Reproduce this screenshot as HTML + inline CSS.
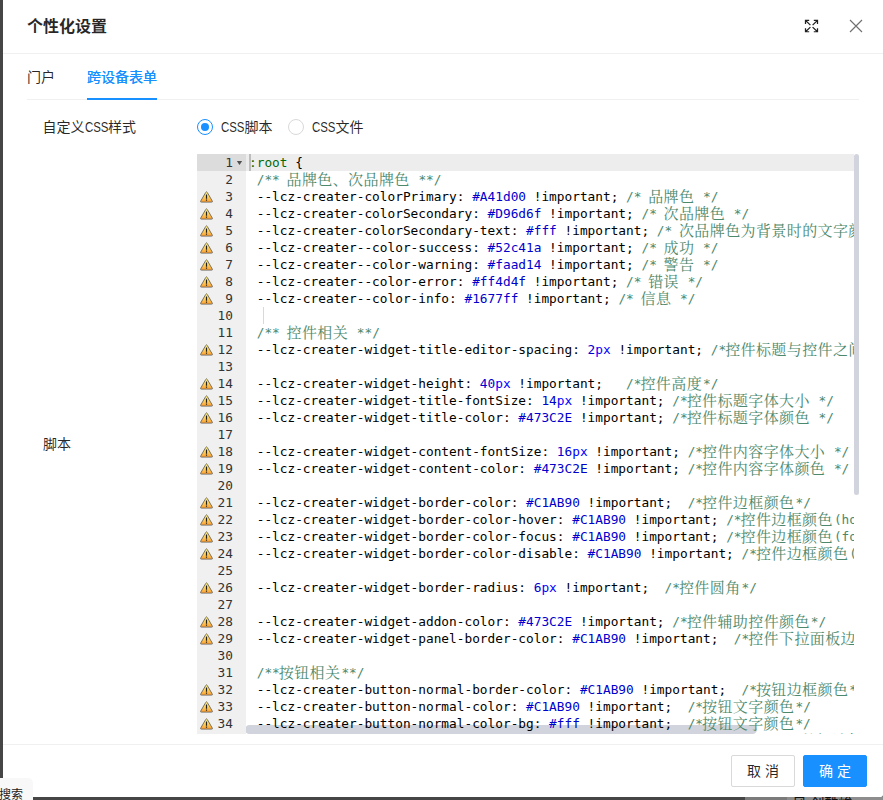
<!DOCTYPE html>
<html lang="zh-CN">
<head>
<meta charset="utf-8">
<title>个性化设置</title>
<style>
*{box-sizing:border-box;margin:0;padding:0}
html,body{width:883px;height:800px;overflow:hidden}
body{position:relative;background:#464646;font-family:"Liberation Sans","Noto Sans CJK SC",sans-serif;font-size:14px;color:rgba(0,0,0,.85)}
.bgr1{position:absolute;left:745px;top:797px;width:42px;height:3px;background:#7b7b7b}
.bgr2{position:absolute;left:787px;top:797px;width:96px;height:3px;background:#8d8d8d;overflow:hidden}
.bgr2 span{position:absolute;left:5.5px;top:-1px;font-size:14px;line-height:14px;color:#111;white-space:nowrap}
.modal{position:absolute;left:3px;top:0;width:880px;height:797px;background:#fff;border-radius:0 0 2px 0}
.hd{position:absolute;left:0;top:0;width:880px;height:54px;border-bottom:1px solid #f0f0f0}
.title{position:absolute;left:24px;top:16px;font-size:16px;line-height:22px;font-weight:700;color:rgba(0,0,0,.85);white-space:nowrap}
.ic{position:absolute;display:block}
.tabs{position:absolute;left:24px;top:54px;width:832px;height:46px;border-bottom:1px solid #f0f0f0}
.tab{position:absolute;top:12px;font-size:14px;line-height:22px;white-space:nowrap;color:rgba(0,0,0,.85)}
.tab.on{color:#1890ff;text-shadow:0 0 .25px currentColor}
.ink{position:absolute;left:60px;top:44px;width:70px;height:2px;background:#1890ff}
.lbl{position:absolute;font-size:14px;line-height:22px;white-space:nowrap;color:rgba(0,0,0,.85)}
.nw{display:inline-block;transform:scaleX(.815);transform-origin:0 50%;margin-right:-5.3px}
.radio{position:absolute;width:16px;height:16px;border:1px solid #d9d9d9;border-radius:50%;background:#fff}
.radio.on{border-color:#1890ff}
.radio.on::after{content:"";position:absolute;left:3px;top:3px;width:8px;height:8px;border-radius:50%;background:#1890ff}
/* editor */
.ed{position:absolute;left:194px;top:154px;width:662px;height:580px;overflow:hidden;background:#fff;font-family:"DejaVu Sans Mono","Liberation Mono","Noto Sans CJK SC",monospace;font-size:12.79px;line-height:17px;color:#000}
.gut{position:absolute;left:0;top:0;width:49px;height:580px;background:#f0f0f0;color:#333}
.gc{position:relative;height:17px;padding-right:13px;text-align:right;white-space:pre}
.gc.a{background:#dcdcdc}
.gc svg{position:absolute;left:3px;top:2.5px;width:13px;height:12px;display:block}
.fold{position:absolute;left:39.8px;top:7px;width:5.4px;height:4px;background:#505050;clip-path:polygon(0 0,100% 0,50% 100%)}
.sc{position:absolute;left:49px;top:0;width:608px;height:580px;overflow:hidden}
.al{position:absolute;left:0;top:0;width:608px;height:17px;background:rgba(0,0,0,.07)}
.cur{position:absolute;left:3px;top:0;width:2px;height:17px;background:#bdbdbd}
.ig{position:absolute;left:17px;top:153px;width:1px;height:17px;background:#d9d9d9}
.tx{position:absolute;left:3px;top:0}
.l{height:17px;white-space:pre}
.l i{font-style:normal;display:inline-block;vertical-align:top;height:17px;line-height:17px;font-family:"Noto Serif CJK SC","Noto Sans CJK SC",serif;font-size:15px;letter-spacing:.4px;font-weight:400;position:relative;top:-1px;left:-1px}
.s{color:rgb(3,106,7)}
.n{color:rgb(0,0,205)}
.k{color:rgb(0,0,255)}
.c{color:rgb(76,136,107)}
.vs{position:absolute;left:657px;top:0;width:5px;height:341px;border-radius:3px;background:#d1d4dc}
.hs{position:absolute;left:48px;top:571px;width:512px;height:9px;border-radius:5px;background:#d1d4dc}
/* footer */
.ft{position:absolute;left:0;top:744px;width:880px;height:53px;border-top:1px solid #f0f0f0}
.btn{position:absolute;top:10px;width:64px;height:32px;border:1px solid #d9d9d9;border-radius:2px;background:#fff;font-size:14px;line-height:30px;text-align:center;color:rgba(0,0,0,.85);letter-spacing:4px;padding-left:4px;white-space:nowrap}
.btn.p{background:#1890ff;border-color:#1890ff;color:#fff}
.tag{position:absolute;left:0;top:778px;width:33px;height:22px;background:#f8f8f8;border-radius:0 5px 0 0;overflow:hidden}
.tag span{position:absolute;left:-1px;top:9px;font-size:12px;line-height:16px;color:#222;white-space:nowrap}
</style>
</head>
<body>
<div class="bgr1"></div>
<div class="bgr2"><span>风 创酷峻</span></div>
<svg width="0" height="0" style="position:absolute"><defs><linearGradient id="wg" x1="0" y1="0" x2="0" y2="1"><stop offset="0" stop-color="#fff78f"/><stop offset="0.45" stop-color="#ffd560"/><stop offset="1" stop-color="#ff9d2c"/></linearGradient></defs></svg>
<div class="modal">
  <div class="hd">
    <div class="title">个性化设置</div>
    <svg class="ic" style="left:801px;top:19px" width="15" height="14.2" viewBox="0 0 15 15" preserveAspectRatio="none" fill="none" stroke="#1f1f1f" stroke-width="1.25">
      <path d="M1.5 5.2V1.5H5.2M1.5 1.5L6.4 6.4M9.8 1.5H13.5V5.2M13.5 1.5L8.6 6.4M1.5 9.8V13.5H5.2M1.5 13.5L6.4 8.6M13.5 9.8V13.5H9.8M13.5 13.5L8.6 8.6"/>
    </svg>
    <svg class="ic" style="left:846px;top:19px" width="14" height="14" viewBox="0 0 14 14" fill="none" stroke="#707070" stroke-width="1.15">
      <path d="M1 1L13 13M13 1L1 13"/>
    </svg>
  </div>
  <div class="tabs">
    <div class="tab" style="left:0">门户</div>
    <div class="tab on" style="left:60px">跨设备表单</div>
    <div class="ink"></div>
  </div>
  <div class="lbl" style="left:39.5px;top:116px">自定义<span class="nw">CSS</span>样式</div>
  <div class="radio on" style="left:194px;top:119px"></div>
  <div class="lbl" style="left:218px;top:116px"><span class="nw">CSS</span>脚本</div>
  <div class="radio" style="left:285px;top:119px"></div>
  <div class="lbl" style="left:309px;top:116px"><span class="nw">CSS</span>文件</div>
  <div class="lbl" style="left:40px;top:433px">脚本</div>

  <div class="ed">
    <div class="gut">
<div class="gc a">1</div>
<div class="gc">2</div>
<div class="gc w"><svg viewBox="0 0 13 12"><path d="M5.7 1.5Q6.5 0.1 7.3 1.5L12.3 10.1Q12.8 11.1 11.7 11.1H1.3Q0.2 11.1 0.7 10.1Z" fill="url(#wg)" stroke="#6b655c" stroke-width="0.9" stroke-linejoin="round"/><path d="M5.9 3.5h1.2v4.3h-1.2zM5.9 8.6h1.2v1.2h-1.2z" fill="#1e1e1e"/></svg>3</div>
<div class="gc w"><svg viewBox="0 0 13 12"><path d="M5.7 1.5Q6.5 0.1 7.3 1.5L12.3 10.1Q12.8 11.1 11.7 11.1H1.3Q0.2 11.1 0.7 10.1Z" fill="url(#wg)" stroke="#6b655c" stroke-width="0.9" stroke-linejoin="round"/><path d="M5.9 3.5h1.2v4.3h-1.2zM5.9 8.6h1.2v1.2h-1.2z" fill="#1e1e1e"/></svg>4</div>
<div class="gc w"><svg viewBox="0 0 13 12"><path d="M5.7 1.5Q6.5 0.1 7.3 1.5L12.3 10.1Q12.8 11.1 11.7 11.1H1.3Q0.2 11.1 0.7 10.1Z" fill="url(#wg)" stroke="#6b655c" stroke-width="0.9" stroke-linejoin="round"/><path d="M5.9 3.5h1.2v4.3h-1.2zM5.9 8.6h1.2v1.2h-1.2z" fill="#1e1e1e"/></svg>5</div>
<div class="gc w"><svg viewBox="0 0 13 12"><path d="M5.7 1.5Q6.5 0.1 7.3 1.5L12.3 10.1Q12.8 11.1 11.7 11.1H1.3Q0.2 11.1 0.7 10.1Z" fill="url(#wg)" stroke="#6b655c" stroke-width="0.9" stroke-linejoin="round"/><path d="M5.9 3.5h1.2v4.3h-1.2zM5.9 8.6h1.2v1.2h-1.2z" fill="#1e1e1e"/></svg>6</div>
<div class="gc w"><svg viewBox="0 0 13 12"><path d="M5.7 1.5Q6.5 0.1 7.3 1.5L12.3 10.1Q12.8 11.1 11.7 11.1H1.3Q0.2 11.1 0.7 10.1Z" fill="url(#wg)" stroke="#6b655c" stroke-width="0.9" stroke-linejoin="round"/><path d="M5.9 3.5h1.2v4.3h-1.2zM5.9 8.6h1.2v1.2h-1.2z" fill="#1e1e1e"/></svg>7</div>
<div class="gc w"><svg viewBox="0 0 13 12"><path d="M5.7 1.5Q6.5 0.1 7.3 1.5L12.3 10.1Q12.8 11.1 11.7 11.1H1.3Q0.2 11.1 0.7 10.1Z" fill="url(#wg)" stroke="#6b655c" stroke-width="0.9" stroke-linejoin="round"/><path d="M5.9 3.5h1.2v4.3h-1.2zM5.9 8.6h1.2v1.2h-1.2z" fill="#1e1e1e"/></svg>8</div>
<div class="gc w"><svg viewBox="0 0 13 12"><path d="M5.7 1.5Q6.5 0.1 7.3 1.5L12.3 10.1Q12.8 11.1 11.7 11.1H1.3Q0.2 11.1 0.7 10.1Z" fill="url(#wg)" stroke="#6b655c" stroke-width="0.9" stroke-linejoin="round"/><path d="M5.9 3.5h1.2v4.3h-1.2zM5.9 8.6h1.2v1.2h-1.2z" fill="#1e1e1e"/></svg>9</div>
<div class="gc">10</div>
<div class="gc">11</div>
<div class="gc w"><svg viewBox="0 0 13 12"><path d="M5.7 1.5Q6.5 0.1 7.3 1.5L12.3 10.1Q12.8 11.1 11.7 11.1H1.3Q0.2 11.1 0.7 10.1Z" fill="url(#wg)" stroke="#6b655c" stroke-width="0.9" stroke-linejoin="round"/><path d="M5.9 3.5h1.2v4.3h-1.2zM5.9 8.6h1.2v1.2h-1.2z" fill="#1e1e1e"/></svg>12</div>
<div class="gc">13</div>
<div class="gc w"><svg viewBox="0 0 13 12"><path d="M5.7 1.5Q6.5 0.1 7.3 1.5L12.3 10.1Q12.8 11.1 11.7 11.1H1.3Q0.2 11.1 0.7 10.1Z" fill="url(#wg)" stroke="#6b655c" stroke-width="0.9" stroke-linejoin="round"/><path d="M5.9 3.5h1.2v4.3h-1.2zM5.9 8.6h1.2v1.2h-1.2z" fill="#1e1e1e"/></svg>14</div>
<div class="gc w"><svg viewBox="0 0 13 12"><path d="M5.7 1.5Q6.5 0.1 7.3 1.5L12.3 10.1Q12.8 11.1 11.7 11.1H1.3Q0.2 11.1 0.7 10.1Z" fill="url(#wg)" stroke="#6b655c" stroke-width="0.9" stroke-linejoin="round"/><path d="M5.9 3.5h1.2v4.3h-1.2zM5.9 8.6h1.2v1.2h-1.2z" fill="#1e1e1e"/></svg>15</div>
<div class="gc w"><svg viewBox="0 0 13 12"><path d="M5.7 1.5Q6.5 0.1 7.3 1.5L12.3 10.1Q12.8 11.1 11.7 11.1H1.3Q0.2 11.1 0.7 10.1Z" fill="url(#wg)" stroke="#6b655c" stroke-width="0.9" stroke-linejoin="round"/><path d="M5.9 3.5h1.2v4.3h-1.2zM5.9 8.6h1.2v1.2h-1.2z" fill="#1e1e1e"/></svg>16</div>
<div class="gc">17</div>
<div class="gc w"><svg viewBox="0 0 13 12"><path d="M5.7 1.5Q6.5 0.1 7.3 1.5L12.3 10.1Q12.8 11.1 11.7 11.1H1.3Q0.2 11.1 0.7 10.1Z" fill="url(#wg)" stroke="#6b655c" stroke-width="0.9" stroke-linejoin="round"/><path d="M5.9 3.5h1.2v4.3h-1.2zM5.9 8.6h1.2v1.2h-1.2z" fill="#1e1e1e"/></svg>18</div>
<div class="gc w"><svg viewBox="0 0 13 12"><path d="M5.7 1.5Q6.5 0.1 7.3 1.5L12.3 10.1Q12.8 11.1 11.7 11.1H1.3Q0.2 11.1 0.7 10.1Z" fill="url(#wg)" stroke="#6b655c" stroke-width="0.9" stroke-linejoin="round"/><path d="M5.9 3.5h1.2v4.3h-1.2zM5.9 8.6h1.2v1.2h-1.2z" fill="#1e1e1e"/></svg>19</div>
<div class="gc">20</div>
<div class="gc w"><svg viewBox="0 0 13 12"><path d="M5.7 1.5Q6.5 0.1 7.3 1.5L12.3 10.1Q12.8 11.1 11.7 11.1H1.3Q0.2 11.1 0.7 10.1Z" fill="url(#wg)" stroke="#6b655c" stroke-width="0.9" stroke-linejoin="round"/><path d="M5.9 3.5h1.2v4.3h-1.2zM5.9 8.6h1.2v1.2h-1.2z" fill="#1e1e1e"/></svg>21</div>
<div class="gc w"><svg viewBox="0 0 13 12"><path d="M5.7 1.5Q6.5 0.1 7.3 1.5L12.3 10.1Q12.8 11.1 11.7 11.1H1.3Q0.2 11.1 0.7 10.1Z" fill="url(#wg)" stroke="#6b655c" stroke-width="0.9" stroke-linejoin="round"/><path d="M5.9 3.5h1.2v4.3h-1.2zM5.9 8.6h1.2v1.2h-1.2z" fill="#1e1e1e"/></svg>22</div>
<div class="gc w"><svg viewBox="0 0 13 12"><path d="M5.7 1.5Q6.5 0.1 7.3 1.5L12.3 10.1Q12.8 11.1 11.7 11.1H1.3Q0.2 11.1 0.7 10.1Z" fill="url(#wg)" stroke="#6b655c" stroke-width="0.9" stroke-linejoin="round"/><path d="M5.9 3.5h1.2v4.3h-1.2zM5.9 8.6h1.2v1.2h-1.2z" fill="#1e1e1e"/></svg>23</div>
<div class="gc w"><svg viewBox="0 0 13 12"><path d="M5.7 1.5Q6.5 0.1 7.3 1.5L12.3 10.1Q12.8 11.1 11.7 11.1H1.3Q0.2 11.1 0.7 10.1Z" fill="url(#wg)" stroke="#6b655c" stroke-width="0.9" stroke-linejoin="round"/><path d="M5.9 3.5h1.2v4.3h-1.2zM5.9 8.6h1.2v1.2h-1.2z" fill="#1e1e1e"/></svg>24</div>
<div class="gc">25</div>
<div class="gc w"><svg viewBox="0 0 13 12"><path d="M5.7 1.5Q6.5 0.1 7.3 1.5L12.3 10.1Q12.8 11.1 11.7 11.1H1.3Q0.2 11.1 0.7 10.1Z" fill="url(#wg)" stroke="#6b655c" stroke-width="0.9" stroke-linejoin="round"/><path d="M5.9 3.5h1.2v4.3h-1.2zM5.9 8.6h1.2v1.2h-1.2z" fill="#1e1e1e"/></svg>26</div>
<div class="gc">27</div>
<div class="gc w"><svg viewBox="0 0 13 12"><path d="M5.7 1.5Q6.5 0.1 7.3 1.5L12.3 10.1Q12.8 11.1 11.7 11.1H1.3Q0.2 11.1 0.7 10.1Z" fill="url(#wg)" stroke="#6b655c" stroke-width="0.9" stroke-linejoin="round"/><path d="M5.9 3.5h1.2v4.3h-1.2zM5.9 8.6h1.2v1.2h-1.2z" fill="#1e1e1e"/></svg>28</div>
<div class="gc w"><svg viewBox="0 0 13 12"><path d="M5.7 1.5Q6.5 0.1 7.3 1.5L12.3 10.1Q12.8 11.1 11.7 11.1H1.3Q0.2 11.1 0.7 10.1Z" fill="url(#wg)" stroke="#6b655c" stroke-width="0.9" stroke-linejoin="round"/><path d="M5.9 3.5h1.2v4.3h-1.2zM5.9 8.6h1.2v1.2h-1.2z" fill="#1e1e1e"/></svg>29</div>
<div class="gc">30</div>
<div class="gc">31</div>
<div class="gc w"><svg viewBox="0 0 13 12"><path d="M5.7 1.5Q6.5 0.1 7.3 1.5L12.3 10.1Q12.8 11.1 11.7 11.1H1.3Q0.2 11.1 0.7 10.1Z" fill="url(#wg)" stroke="#6b655c" stroke-width="0.9" stroke-linejoin="round"/><path d="M5.9 3.5h1.2v4.3h-1.2zM5.9 8.6h1.2v1.2h-1.2z" fill="#1e1e1e"/></svg>32</div>
<div class="gc w"><svg viewBox="0 0 13 12"><path d="M5.7 1.5Q6.5 0.1 7.3 1.5L12.3 10.1Q12.8 11.1 11.7 11.1H1.3Q0.2 11.1 0.7 10.1Z" fill="url(#wg)" stroke="#6b655c" stroke-width="0.9" stroke-linejoin="round"/><path d="M5.9 3.5h1.2v4.3h-1.2zM5.9 8.6h1.2v1.2h-1.2z" fill="#1e1e1e"/></svg>33</div>
<div class="gc w"><svg viewBox="0 0 13 12"><path d="M5.7 1.5Q6.5 0.1 7.3 1.5L12.3 10.1Q12.8 11.1 11.7 11.1H1.3Q0.2 11.1 0.7 10.1Z" fill="url(#wg)" stroke="#6b655c" stroke-width="0.9" stroke-linejoin="round"/><path d="M5.9 3.5h1.2v4.3h-1.2zM5.9 8.6h1.2v1.2h-1.2z" fill="#1e1e1e"/></svg>34</div>
<div class="gc w"><svg viewBox="0 0 13 12"><path d="M5.7 1.5Q6.5 0.1 7.3 1.5L12.3 10.1Q12.8 11.1 11.7 11.1H1.3Q0.2 11.1 0.7 10.1Z" fill="url(#wg)" stroke="#6b655c" stroke-width="0.9" stroke-linejoin="round"/><path d="M5.9 3.5h1.2v4.3h-1.2zM5.9 8.6h1.2v1.2h-1.2z" fill="#1e1e1e"/></svg>35</div>
      <div class="fold"></div>
    </div>
    <div class="sc">
      <div class="al"></div>
      <div class="hs" style="left:-1px"></div>
      <div class="ig"></div>
      <div class="tx">
<div class="l"><span class="s">:root</span> {</div>
<div class="l"> <span class="c">/** <i>品牌色、次品牌色</i> **/</span></div>
<div class="l"> --lcz-creater-colorPrimary: <span class="n">#A41d00</span> !important; <span class="c">/* <i>品牌色</i> */</span></div>
<div class="l"> --lcz-creater-colorSecondary: <span class="n">#D96d6f</span> !important; <span class="c">/* <i>次品牌色</i> */</span></div>
<div class="l"> --lcz-creater-colorSecondary-text: <span class="n">#fff</span> !important; <span class="c">/* <i>次品牌色为背景时的文字颜色</i> */</span></div>
<div class="l"> --lcz-creater--color-success: <span class="n">#52c41a</span> !important; <span class="c">/* <i>成功</i> */</span></div>
<div class="l"> --lcz-creater--color-warning: <span class="n">#faad14</span> !important; <span class="c">/* <i>警告</i> */</span></div>
<div class="l"> --lcz-creater--color-error: <span class="n">#ff4d4f</span> !important; <span class="c">/* <i>错误</i> */</span></div>
<div class="l"> --lcz-creater--color-info: <span class="n">#1677ff</span> !important; <span class="c">/* <i>信息</i> */</span></div>
<div class="l"></div>
<div class="l"> <span class="c">/** <i>控件相关</i> **/</span></div>
<div class="l"> --lcz-creater-widget-title-editor-spacing: <span class="n">2</span><span class="k">px</span> !important; <span class="c">/*<i>控件标题与控件之间的间距</i>*/</span></div>
<div class="l"></div>
<div class="l"> --lcz-creater-widget-height: <span class="n">40</span><span class="k">px</span> !important;   <span class="c">/*<i>控件高度</i>*/</span></div>
<div class="l"> --lcz-creater-widget-title-fontSize: <span class="n">14</span><span class="k">px</span> !important; <span class="c">/*<i>控件标题字体大小</i> */</span></div>
<div class="l"> --lcz-creater-widget-title-color: <span class="n">#473C2E</span> !important; <span class="c">/*<i>控件标题字体颜色</i> */</span></div>
<div class="l"></div>
<div class="l"> --lcz-creater-widget-content-fontSize: <span class="n">16</span><span class="k">px</span> !important; <span class="c">/*<i>控件内容字体大小</i> */</span></div>
<div class="l"> --lcz-creater-widget-content-color: <span class="n">#473C2E</span> !important; <span class="c">/*<i>控件内容字体颜色</i> */</span></div>
<div class="l"></div>
<div class="l"> --lcz-creater-widget-border-color: <span class="n">#C1AB90</span> !important;  <span class="c">/*<i>控件边框颜色</i>*/</span></div>
<div class="l"> --lcz-creater-widget-border-color-hover: <span class="n">#C1AB90</span> !important; <span class="c">/*<i>控件边框颜色</i>(hover)*/</span></div>
<div class="l"> --lcz-creater-widget-border-color-focus: <span class="n">#C1AB90</span> !important; <span class="c">/*<i>控件边框颜色</i>(focus)*/</span></div>
<div class="l"> --lcz-creater-widget-border-color-disable: <span class="n">#C1AB90</span> !important; <span class="c">/*<i>控件边框颜色</i>(disable)*/</span></div>
<div class="l"></div>
<div class="l"> --lcz-creater-widget-border-radius: <span class="n">6</span><span class="k">px</span> !important;  <span class="c">/*<i>控件圆角</i>*/</span></div>
<div class="l"></div>
<div class="l"> --lcz-creater-widget-addon-color: <span class="n">#473C2E</span> !important; <span class="c">/*<i>控件辅助控件颜色</i>*/</span></div>
<div class="l"> --lcz-creater-widget-panel-border-color: <span class="n">#C1AB90</span> !important;  <span class="c">/*<i>控件下拉面板边框颜色</i>*/</span></div>
<div class="l"></div>
<div class="l"> <span class="c">/**<i>按钮相关</i>**/</span></div>
<div class="l"> --lcz-creater-button-normal-border-color: <span class="n">#C1AB90</span> !important;  <span class="c">/*<i>按钮边框颜色</i>*/</span></div>
<div class="l"> --lcz-creater-button-normal-color: <span class="n">#C1AB90</span> !important;  <span class="c">/*<i>按钮文字颜色</i>*/</span></div>
<div class="l"> --lcz-creater-button-normal-color-bg: <span class="n">#fff</span> !important;  <span class="c">/*<i>按钮文字颜色</i>*/</span></div>
<div class="l"> --lcz-creater-button-normal-border-color-hover: <span class="n">#A41d00</span> !important;  <span class="c">/*<i>按钮边框颜色</i>(hover)*/</span></div>
      </div>
      <div class="cur"></div>
    </div>
    <div class="vs"></div>
  </div>

  <div class="ft">
    <div class="btn" style="left:728px">取消</div>
    <div class="btn p" style="left:800px">确定</div>
  </div>
</div>
<div class="tag"><span>搜索</span></div>
</body>
</html>
